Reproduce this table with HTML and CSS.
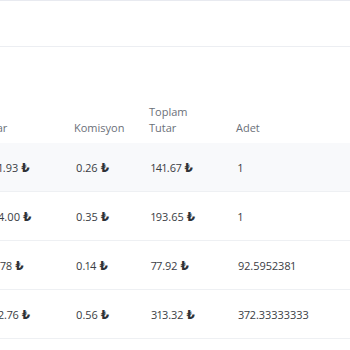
FILE: index.html
```html
<!DOCTYPE html>
<html lang="tr">
<head>
<meta charset="utf-8">
<link rel="stylesheet" href="styles.css">
</head>
<body>
<div class="page">
  <div class="toolbar"></div>
  <div class="table">
    <div class="row head">
      <div class="cell">Tutar</div>
      <div class="cell">Komisyon</div>
      <div class="cell">Toplam<br>Tutar</div>
      <div class="cell">Adet</div>
      <div class="cell"></div>
    </div>
    <div class="row alt">
      <div class="cell">141.93<span class="tl">₺</span></div>
      <div class="cell">0.26<span class="tl">₺</span></div>
      <div class="cell">141.67<span class="tl">₺</span></div>
      <div class="cell">1</div>
      <div class="cell"></div>
    </div>
    <div class="row">
      <div class="cell">194.00<span class="tl">₺</span></div>
      <div class="cell">0.35<span class="tl">₺</span></div>
      <div class="cell">193.65<span class="tl">₺</span></div>
      <div class="cell">1</div>
      <div class="cell"></div>
    </div>
    <div class="row">
      <div class="cell">71.78<span class="tl">₺</span></div>
      <div class="cell">0.14<span class="tl">₺</span></div>
      <div class="cell">77.92<span class="tl">₺</span></div>
      <div class="cell">92.5952381</div>
      <div class="cell"></div>
    </div>
    <div class="row">
      <div class="cell">312.76<span class="tl">₺</span></div>
      <div class="cell">0.56<span class="tl">₺</span></div>
      <div class="cell">313.32<span class="tl">₺</span></div>
      <div class="cell">372.33333333</div>
      <div class="cell"></div>
    </div>
  </div>
</div>
</body>
</html>
```

FILE: styles.css
```css
html, body {
  margin: 0;
  padding: 0;
  background: #ffffff;
}
body {
  font-family: "Open Sans", "Noto Sans", sans-serif;
  color: #3a3d44;
  overflow: hidden;
}
.page {
  width: 350px;
  height: 350px;
  overflow: hidden;
}
.toolbar {
  height: 45px;
  border-top: 1px solid #e8eaf0;
  border-bottom: 1px solid #eceef2;
}
.table {
  margin-top: 48px;
  margin-left: -20px;
}
.row {
  display: grid;
  grid-template-columns: 94px 75px 87px 140px 1fr;
  height: 48px;
  align-items: center;
  border-bottom: 1px solid #eef0f3;
  font-size: 11px;
  font-variant-numeric: proportional-nums;
}
.row .cell {
  padding-left: 2px;
}
.row .cell:first-child {
  padding-left: 7px;
}
.row.head {
  height: 48px;
  align-items: end;
  border-bottom: none;
}
.head .cell,
.head .cell:first-child {
  color: #6b7079;
  font-weight: 500;
  line-height: 16px;
  padding-bottom: 7px;
  padding-left: 0;
}
.alt {
  background: #f8f9fb;
}
.cell {
  white-space: nowrap;
}
.tl {
  display: inline-block;
  font-family: "DejaVu Sans", "Liberation Sans", sans-serif;
  font-weight: 700;
  font-size: 12px;
  line-height: 1;
  color: #2f3237;
  margin-left: 3px;
}
```
